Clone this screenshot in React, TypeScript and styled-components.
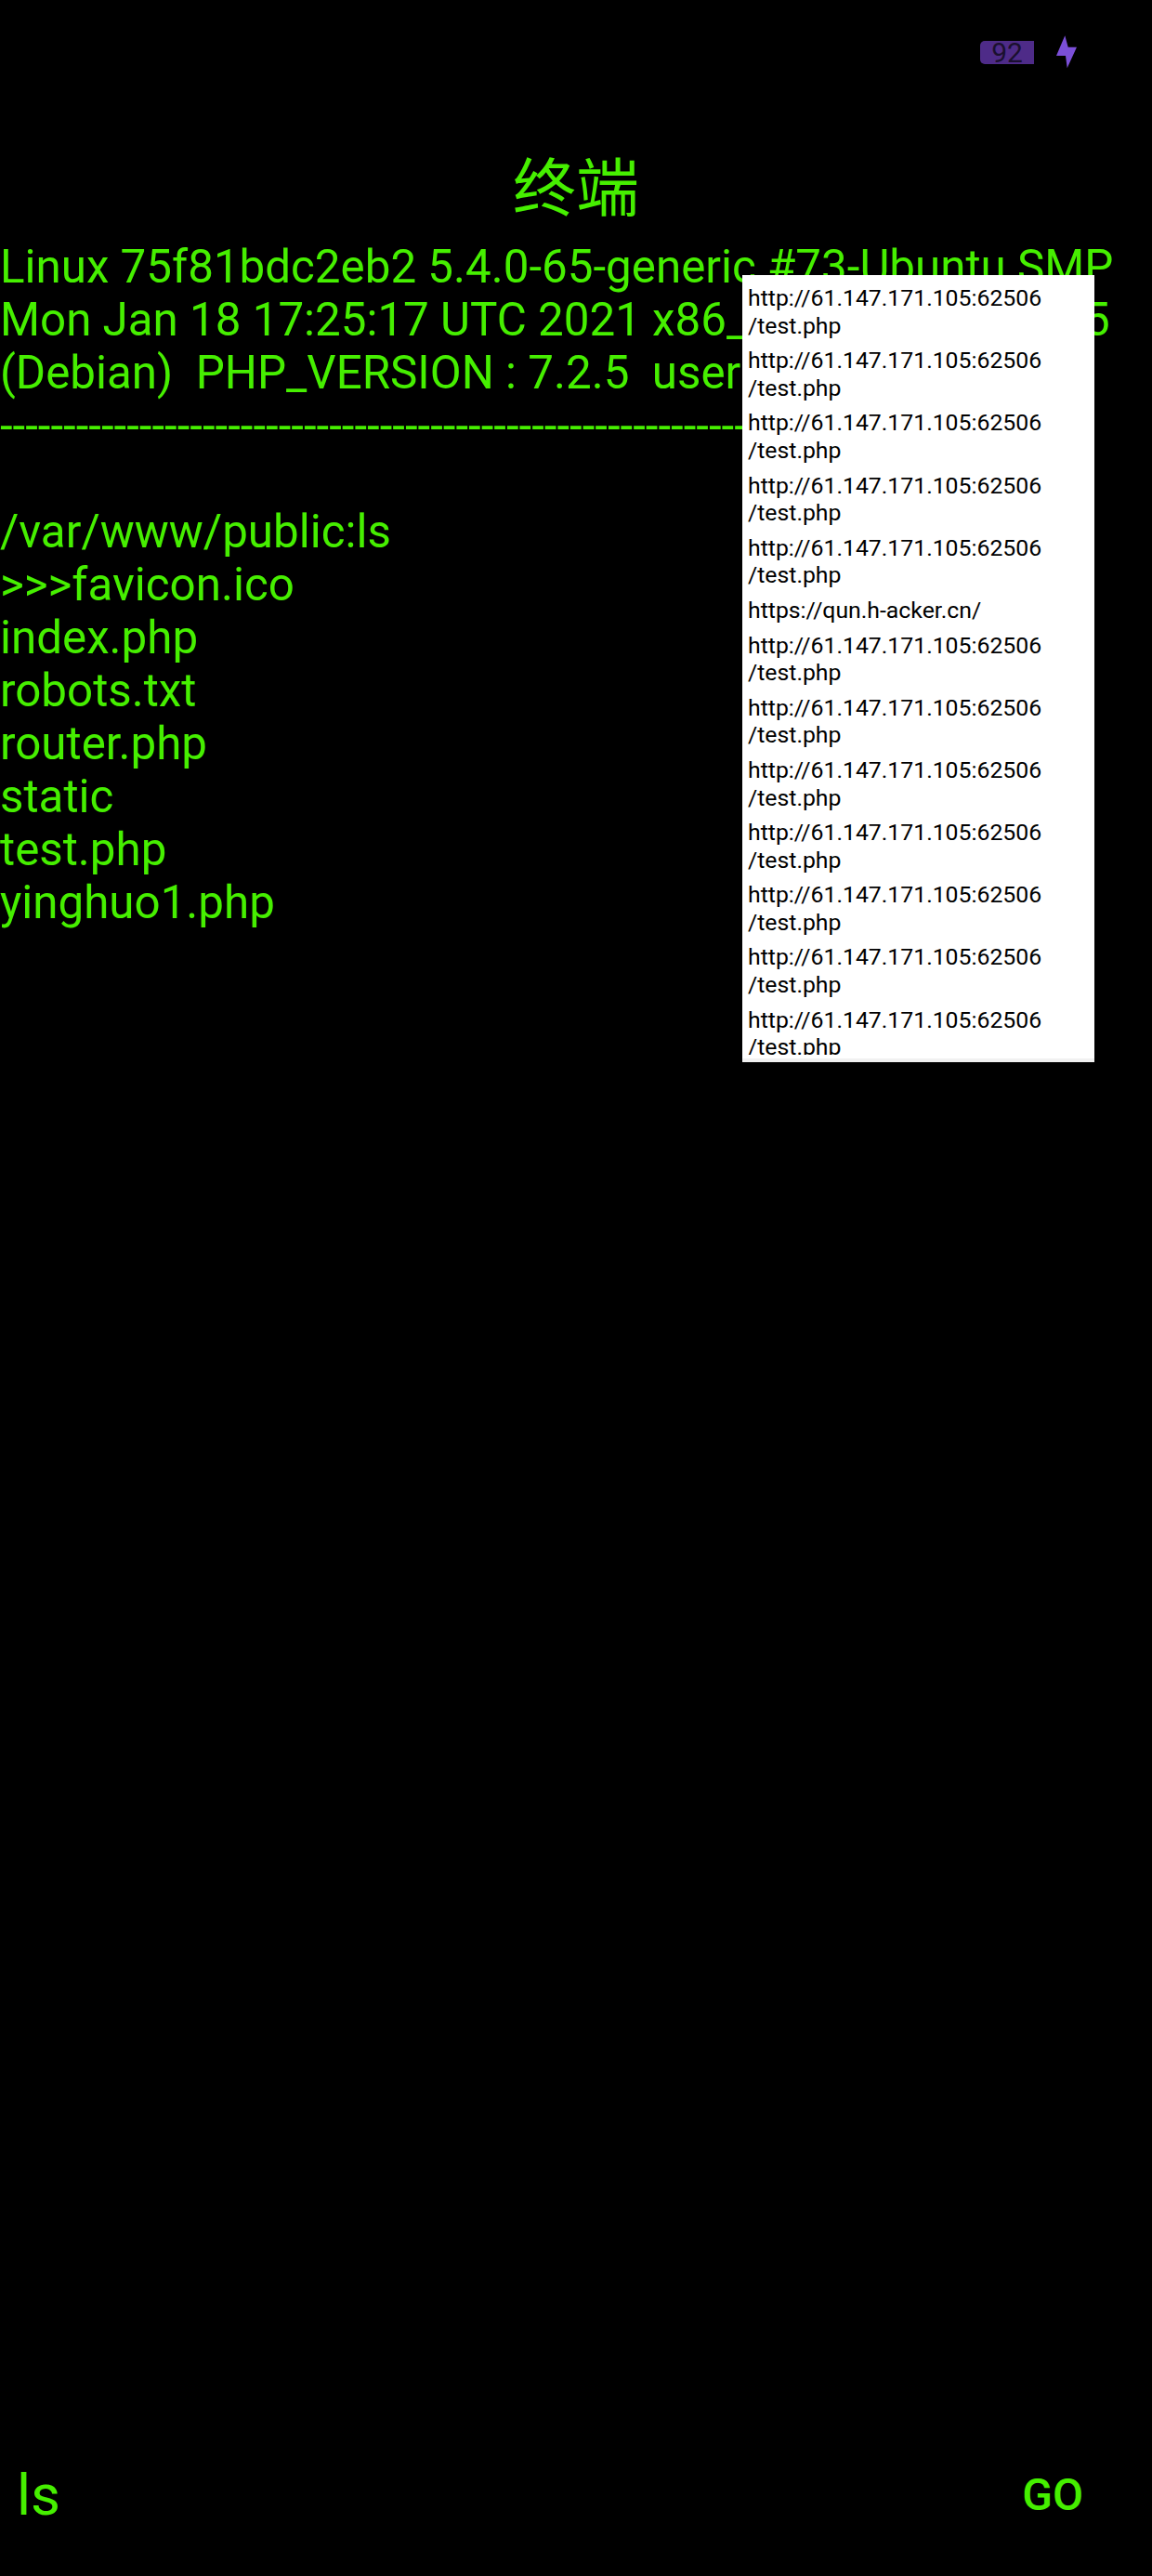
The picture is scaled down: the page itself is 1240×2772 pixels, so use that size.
import React from 'react';
import styled, { createGlobalStyle } from 'styled-components';

const GlobalStyle = createGlobalStyle`
  html, body {
    margin: 0;
    padding: 0;
    background-color: #000;
  }
`;

const GREEN = '#46ef00';

const Page = styled.div`
  position: relative;
  width: 1240px;
  height: 2772px;
  display: flex;
  flex-direction: column;
  overflow: hidden;
  background-color: #000;
  color: ${GREEN};
  font-family: Roboto, "Noto Sans CJK SC", sans-serif;
`;

const StatusBar = styled.div`
  height: 38px;
  padding: 38px 80px 0 0;
  display: flex;
  justify-content: flex-end;
  align-items: flex-start;
  gap: 23px;
`;

const Battery = styled.div`
  width: 58px;
  height: 25px;
  margin-top: 6px;
  border-radius: 5px 0 0 5px;
  background-color: #4e2b88;
  color: #1a102e;
  font-size: 30px;
  line-height: 25px;
  text-align: center;
`;

const Title = styled.h1`
  margin: 83px 0 0;
  height: 90px;
  font-size: 68px;
  font-weight: 400;
  line-height: 90px;
  text-align: center;
`;

const Output = styled.div`
  margin-top: 10px;
  font-size: 49.3px;
  line-height: 57px;
`;

const Line = styled.div`
  height: 57px;
  white-space: pre;
`;

const Popup = styled.div`
  position: absolute;
  top: 296px;
  left: 799px;
  width: 379px;
  height: 847px;
  padding: 6px 0 4px;
  box-sizing: border-box;
  overflow: hidden;
  background-color: #fff;
  border-bottom: 4px solid #f1f1f1;
`;

const PopupList = styled.div`
  height: 100%;
  overflow: hidden;
`;

const PopupItem = styled.div`
  padding: 4px 6px;
  color: #000;
  font-size: 24.8px;
  line-height: 29.6px;
`;

const Path = styled.span`
  display: block;
`;

const Footer = styled.div`
  margin-top: auto;
  height: 125px;
  padding: 0 74px 0 18px;
  display: flex;
  justify-content: space-between;
  align-items: flex-start;
`;

const CommandInput = styled.div`
  font-size: 62px;
  line-height: 75px;
`;

const GoButton = styled.div`
  font-size: 48px;
  font-weight: 500;
  line-height: 56px;
  padding-top: 10px;
`;

const outputLines = [
  'Linux 75f81bdc2eb2 5.4.0-65-generic #73-Ubuntu SMP',
  'Mon Jan 18 17:25:17 UTC 2021 x86_64 Apache/2.4.25',
  '(Debian)  PHP_VERSION : 7.2.5  user',
  '-'.repeat(80),
  ' ',
  '/var/www/public:ls',
  '>>>favicon.ico',
  'index.php',
  'robots.txt',
  'router.php',
  'static',
  'test.php',
  'yinghuo1.php',
];

const urls = [
  ['http://61.147.171.105:62506', '/test.php'],
  ['http://61.147.171.105:62506', '/test.php'],
  ['http://61.147.171.105:62506', '/test.php'],
  ['http://61.147.171.105:62506', '/test.php'],
  ['http://61.147.171.105:62506', '/test.php'],
  ['https://qun.h-acker.cn/'],
  ['http://61.147.171.105:62506', '/test.php'],
  ['http://61.147.171.105:62506', '/test.php'],
  ['http://61.147.171.105:62506', '/test.php'],
  ['http://61.147.171.105:62506', '/test.php'],
  ['http://61.147.171.105:62506', '/test.php'],
  ['http://61.147.171.105:62506', '/test.php'],
  ['http://61.147.171.105:62506', '/test.php'],
];

const App: React.FC = () => {
  return (
    <Page>
      <GlobalStyle />
      <StatusBar>
        <Battery>92</Battery>
        <svg width="24" height="36" viewBox="0 0 24 36">
          <path d="M10.3 0.3 L1 22 L11 22 L12.7 35.3 L23 12.7 L13.7 12.7 Z" fill="#7b4fd8" />
        </svg>
      </StatusBar>
      <Title>终端</Title>
      <Output>
        {outputLines.map((line, i) => (
          <Line key={i}>{line}</Line>
        ))}
      </Output>
      <Popup>
        <PopupList>
          {urls.map(([host, path], i) => (
            <PopupItem key={i}>
              {host}
              {path ? <Path>{path}</Path> : null}
            </PopupItem>
          ))}
        </PopupList>
      </Popup>
      <Footer>
        <CommandInput>ls</CommandInput>
        <GoButton>GO</GoButton>
      </Footer>
    </Page>
  );
};

export default App;
